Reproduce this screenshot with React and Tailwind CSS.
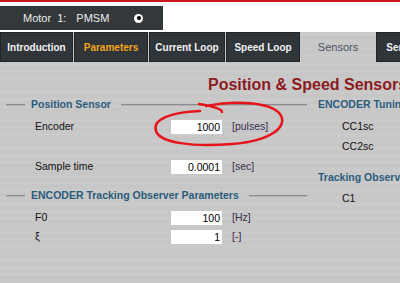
import React from 'react'

const metal =
  'bg-[#c8c8c8] bg-[repeating-linear-gradient(to_bottom,#cccccc_0px,#c4c4c4_1px,#cdcdcd_2px,#c6c6c6_4px,#cacaca_5px,#c2c2c2_6px,#cbcbcb_7px)]'

const tabs = [
  { label: 'Introduction', w: 'w-[73px]' },
  { label: 'Parameters', w: 'w-[74px]', accent: true },
  { label: 'Current Loop', w: 'w-[76px]' },
  { label: 'Speed Loop', w: 'w-[74px]' },
  { label: 'Sensors', w: 'w-[74px]', active: true },
  { label: 'Sensorless', w: 'w-[74px]' },
]

function Header({ children, right }) {
  return (
    <div className="flex items-center h-[20px]">
      <div className={`${right ? 'w-[20px]' : 'w-[19px]'} ml-[6px] h-[2px] bg-[#8d8d8d] border-b border-[#b0b0b0]`} />
      <span className={`${right ? 'ml-[5px]' : 'ml-[6px]'} text-[10.5px] font-bold text-[#2b5c7c] whitespace-nowrap`}>
        {children}
      </span>
      {!right && <div className="flex-1 ml-[10px] h-[2px] bg-[#8d8d8d] border-b border-[#b0b0b0]" />}
    </div>
  )
}

function Field({ label, value, unit, h }) {
  return (
    <div className={`flex items-center ${h} text-[10.5px]`}>
      <span className="w-[171px] shrink-0 pl-[35px] text-[#111]">{label}</span>
      <div className="w-[51px] h-[14px] bg-white text-right pr-[2px] leading-[14px] text-black">{value}</div>
      <span className="ml-[10px] text-[#3a2c4e]">{unit}</span>
    </div>
  )
}

function Label({ children, h }) {
  return (
    <div className={`flex items-center ${h} pl-[35px] text-[10.5px] text-[#111]`}>{children}</div>
  )
}

export default function App() {
  return (
    <div
      className="relative w-[400px] h-[283px] overflow-hidden bg-white flex flex-col"
      style={{ fontFamily: '"Liberation Sans", Arial, sans-serif' }}
    >
      <div className="h-[2px] bg-[#c8171e] shrink-0" />

      <div className="mt-[4px] w-[163px] h-[24px] bg-[#33383b] flex items-center text-[11px] text-[#ececec] shrink-0">
        <span className="ml-[23px]">Motor</span>
        <span className="ml-[6px]">1:</span>
        <span className="ml-[10px]">PMSM</span>
        <span className="ml-[25px] w-[9px] h-[9px] rounded-full bg-white flex items-center justify-center">
          <span className="w-[4px] h-[4px] rounded-full bg-black" />
        </span>
      </div>

      <div className={`mt-[2px] h-[30px] flex gap-px shrink-0 ${metal}`}>
        {tabs.map(t => (
          <div
            key={t.label}
            className={`${t.w} shrink-0 flex items-center justify-center whitespace-nowrap ${
              t.active
                ? 'text-[11px] text-[#4a5562]'
                : `bg-[#30353a] border border-[#202427] text-[10px] font-bold ${t.accent ? 'text-[#f2a41c]' : 'text-[#f2f2f2]'}`
            }`}
          >
            {t.label}
          </div>
        ))}
      </div>

      <div className={`flex-1 ${metal}`}>
        <div className="mt-[13px] h-[20px] flex items-center pl-[208px] text-[16px] font-bold text-[#8c1b1f] whitespace-nowrap">
          Position &amp; Speed Sensors
        </div>

        <div className="flex">
          <div className="w-[307px] shrink-0">
            <Header>Position Sensor</Header>
            <Field label="Encoder" value="1000" unit="[pulses]" h="h-[24px]" />
            <div className="mt-[18px]">
              <Field label="Sample time" value="0.0001" unit="[sec]" h="h-[20px]" />
            </div>
            <div className="mt-[9px]">
              <Header>ENCODER Tracking Observer Parameters</Header>
            </div>
            <div className="mt-[2px]">
              <Field label="F0" value="100" unit="[Hz]" h="h-[20px]" />
            </div>
            <Field label="ξ" value="1" unit="[-]" h="h-[18px]" />
          </div>

          <div className="flex-1 min-w-0">
            <Header right>ENCODER Tuning Parameters</Header>
            <Label h="h-[24px]">CC1sc</Label>
            <Label h="h-[16px]">CC2sc</Label>
            <div className="mt-[13px]">
              <Header right>Tracking Observer Parameters</Header>
            </div>
            <div className="mt-[1px]">
              <Label h="h-[20px]">C1</Label>
            </div>
          </div>
        </div>
      </div>

      <svg className="absolute left-0 top-0 pointer-events-none" width="400" height="283">
        <path
          d="M199 104 C218 107 222 110 222 112 M206 106 C236 100 270 102 280 114 C289 127 270 141 232 144 C192 147 160 143 156 131 C152 119 172 112 200 111"
          fill="none"
          stroke="#e8141b"
          strokeWidth="2.5"
          strokeLinecap="round"
        />
      </svg>
    </div>
  )
}
